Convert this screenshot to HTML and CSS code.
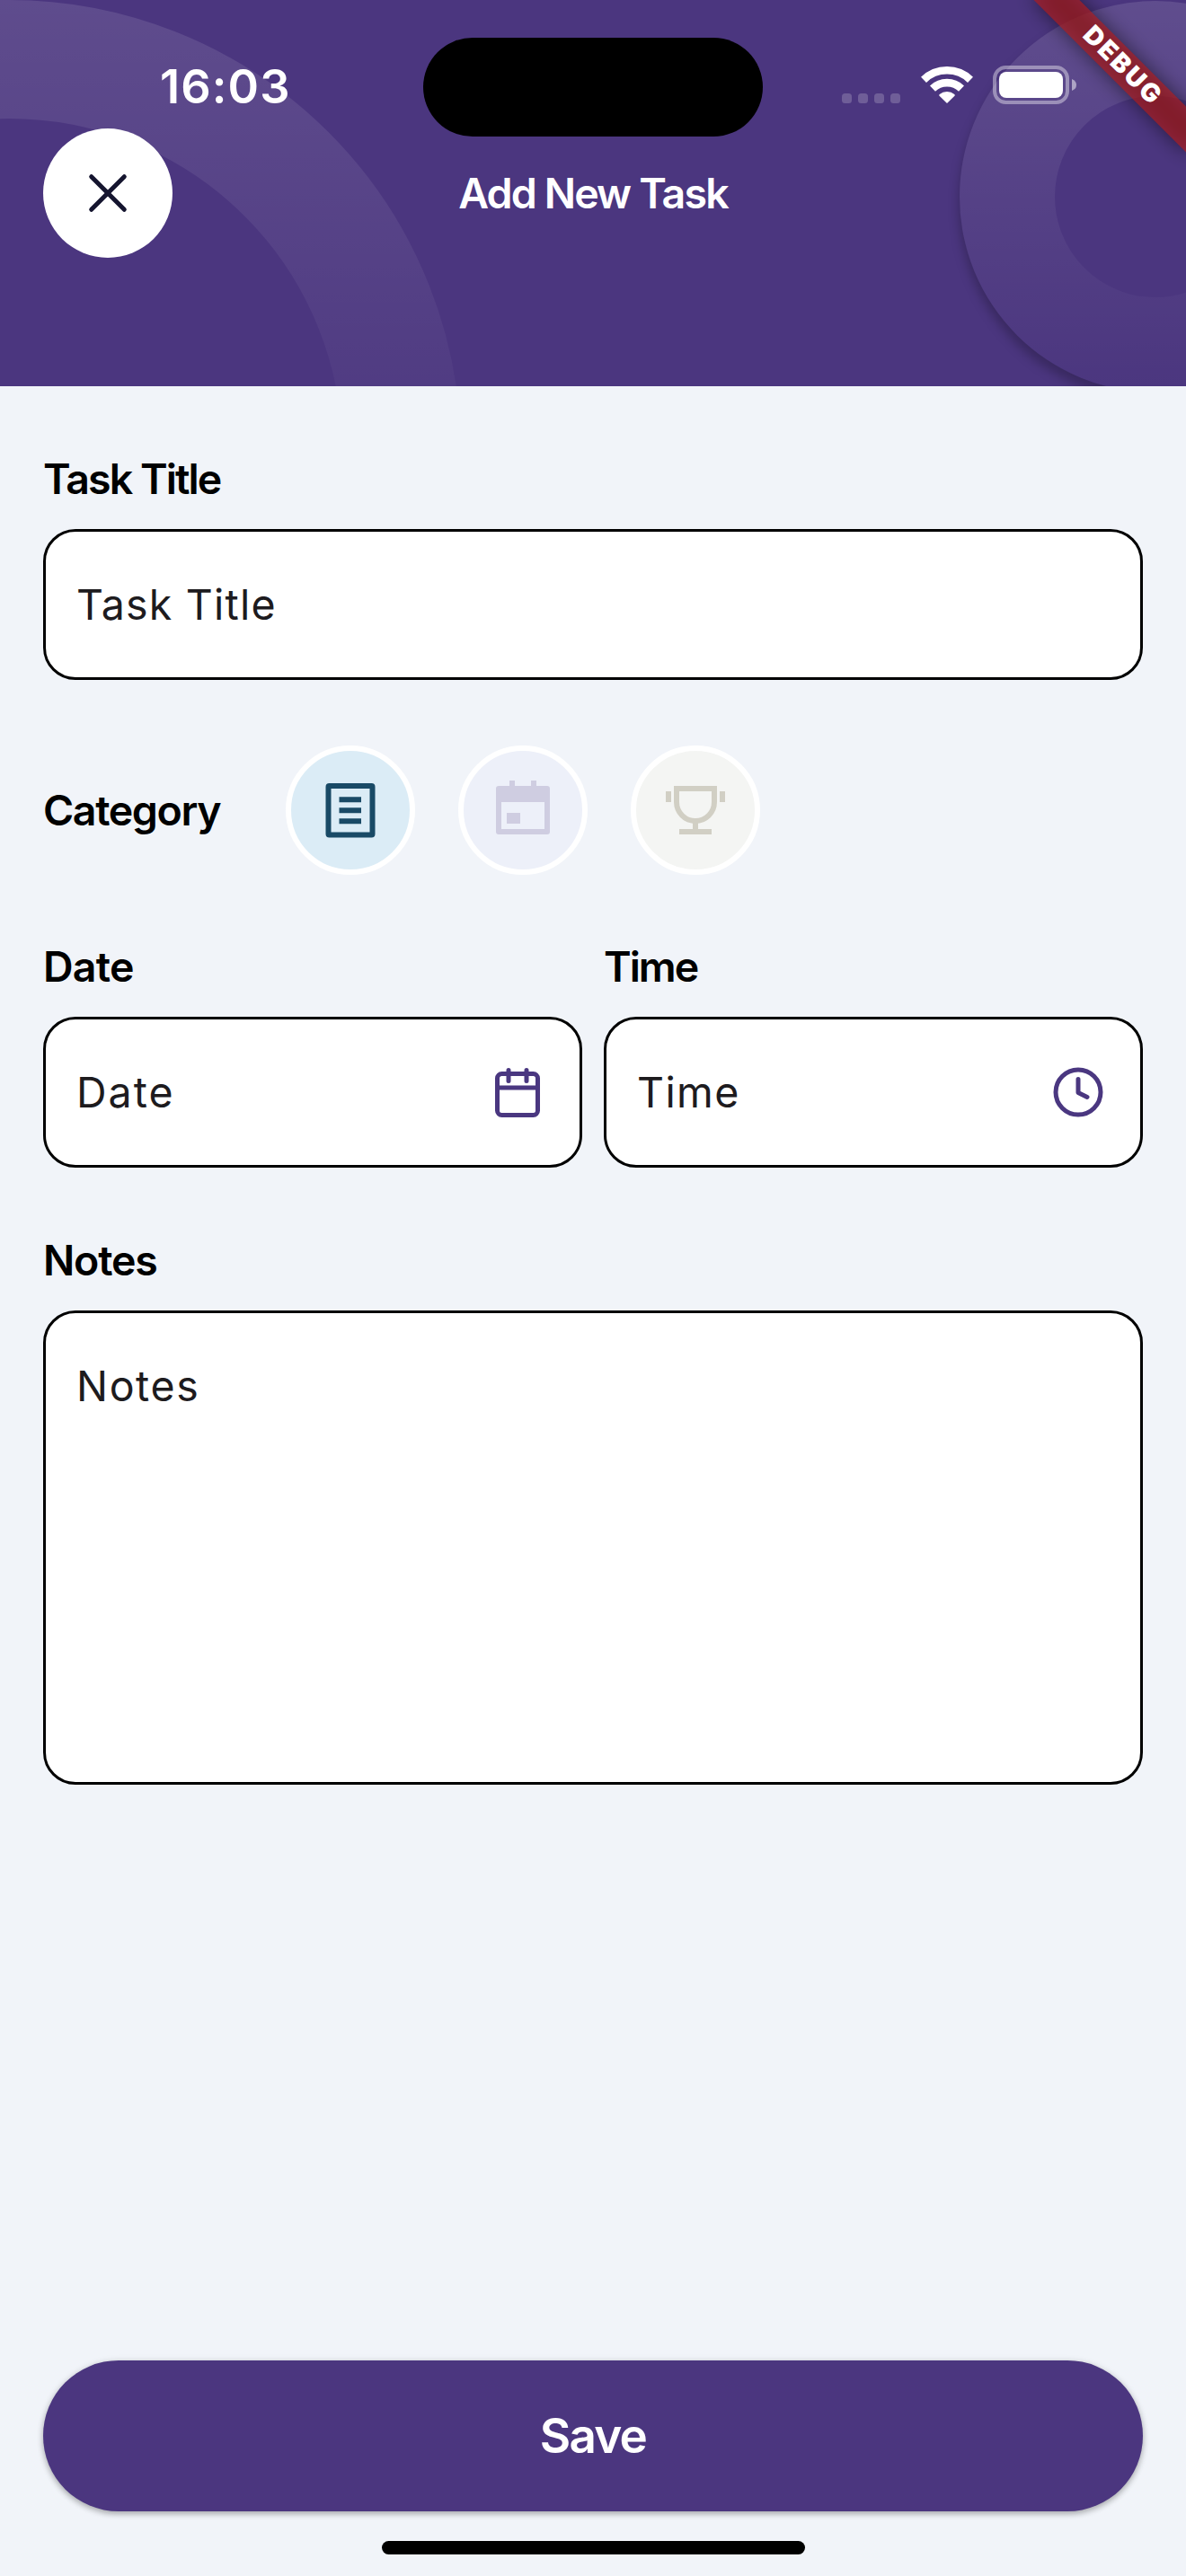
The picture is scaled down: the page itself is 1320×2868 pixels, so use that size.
FILE: index.html
```
<!DOCTYPE html>
<html lang="en">
<head>
<meta charset="utf-8">
<title>Add New Task</title>
<link rel="stylesheet" href="styles.css">
</head>
<body>
<main class="screen">
  <header class="header">
    <svg class="rings" width="1320" height="430" viewBox="0 0 1320 430" aria-hidden="true">
      <defs>
        <linearGradient id="fadeLarge" gradientUnits="userSpaceOnUse" x1="0" y1="0" x2="0" y2="590">
          <stop offset="0" stop-color="#fff" stop-opacity=".11"/>
          <stop offset="1" stop-color="#fff" stop-opacity="0"/>
        </linearGradient>
        <linearGradient id="fadeSmall" gradientUnits="userSpaceOnUse" x1="0" y1="0" x2="0" y2="438">
          <stop offset="0" stop-color="#fff" stop-opacity=".115"/>
          <stop offset="1" stop-color="#fff" stop-opacity="0"/>
        </linearGradient>
        <filter id="soft" x="-20%" y="-20%" width="140%" height="140%"><feGaussianBlur stdDeviation="6"/></filter>
        <mask id="outside">
          <rect width="1320" height="430" fill="#fff"/>
          <circle cx="1286" cy="219" r="218" fill="#000"/>
        </mask>
      </defs>
      <circle cx="10" cy="503" r="437" fill="none" stroke="url(#fadeLarge)" stroke-width="132"/>
      <g mask="url(#outside)"><circle cx="1285" cy="228" r="218" fill="#000" fill-opacity=".24" filter="url(#soft)"/></g>
      <circle cx="1286" cy="219" r="165" fill="none" stroke="url(#fadeSmall)" stroke-width="106"/>
    </svg>

    <div class="status">
      <div class="status-time">16:03</div>
      <div class="island"></div>
      <div class="status-icons">
        <div class="dots"><i></i><i></i><i></i><i></i></div>
        <svg class="wifi" width="58" height="43" viewBox="0 0 58 43" fill="none" stroke="#fff" aria-hidden="true">
          <path d="M3 15.8A37.5 37.5 0 0 1 55 15.8" stroke-width="8.6"/>
          <path d="M13 25.6A23 23 0 0 1 45 25.6" stroke-width="8.6"/>
          <path d="M29 42L20.3 33.4Q20 32.6 20.7 32A12.6 12.6 0 0 1 37.3 32Q38 32.6 37.7 33.4Z" fill="#fff" stroke="none"/>
        </svg>
        <svg class="battery" width="94" height="43" viewBox="0 0 94 43" aria-hidden="true">
          <rect x="2" y="2" width="81" height="39" rx="12.5" fill="none" stroke="#fff" stroke-opacity=".4" stroke-width="4"/>
          <rect x="7" y="7" width="71" height="29" rx="8" fill="#fff"/>
          <path d="M88 15Q93 17 93 21.5T88 28Z" fill="#fff" fill-opacity=".5"/>
        </svg>
      </div>
    </div>

    <div class="nav">
      <button class="close" aria-label="Close">
        <svg width="44" height="44" viewBox="0 0 44 44" fill="none" stroke="#15152f" stroke-width="5" stroke-linecap="round"><path d="M3.7 3.7L40.3 40.3M40.3 3.7L3.7 40.3"/></svg>
      </button>
      <h1 class="title">Add New Task</h1>
    </div>

    <svg class="ribbon" width="220" height="220" viewBox="0 0 220 220" aria-label="DEBUG">
      <defs><filter id="ribbonShadow" x="-20%" y="-120%" width="140%" height="340%"><feGaussianBlur stdDeviation="11"/></filter></defs>
      <g transform="translate(148 72) rotate(45)">
        <rect x="-120" y="-18" width="240" height="36" fill="#000" fill-opacity=".5" filter="url(#ribbonShadow)"/>
        <rect x="-120" y="-18" width="240" height="36" fill="#b71c1c" fill-opacity=".63"/>
        <text class="ribbon-text" x="2" y="9" text-anchor="middle">DEBUG</text>
      </g>
    </svg>
  </header>

  <form class="form">
    <div class="field">
      <div class="label ls-title">Task Title</div>
      <div class="box"><span class="hint hint-title">Task Title</span></div>
    </div>

    <div class="category">
      <div class="label ls-category">Category</div>
      <div class="choices">
        <div class="choice choice-task">
          <svg width="72" height="72" viewBox="0 0 72 72" aria-hidden="true">
            <rect x="11.5" y="9" width="49" height="54.5" rx="1" fill="none" stroke="#194a66" stroke-width="6"/>
            <path d="M23.5 21.2h24.5v6h-24.5zM23.5 33.3h24.5v6h-24.5zM23.5 45.2h24.5v6h-24.5z" fill="#194a66"/>
          </svg>
        </div>
        <div class="choice choice-event">
          <svg width="72" height="72" viewBox="0 0 72 72" aria-hidden="true" fill="#cfcde1">
            <path fill-rule="evenodd" d="M21 3h6v6h18V3h6v6h12a3 3 0 0 1 3 3v48a3 3 0 0 1-3 3H9a3 3 0 0 1-3-3V12a3 3 0 0 1 3-3h12zM12 27v30h48V27z"/>
            <rect x="18" y="39" width="15" height="12"/>
          </svg>
        </div>
        <div class="choice choice-goal">
          <svg width="72" height="72" viewBox="0 0 72 72" aria-hidden="true" fill="#d1cfc4">
            <path d="M15 12h42v15a21 21 0 0 1-42 0z" fill="none" stroke="#d1cfc4" stroke-width="6"/>
            <path d="M33 49h6v8h15v6H18v-6h15zM3 15h6v12H3zM63 15h6v12h-6z"/>
          </svg>
        </div>
      </div>
    </div>

    <div class="row">
      <div class="field">
        <div class="label ls-date">Date</div>
        <div class="box">
          <span class="hint hint-date">Date</span>
          <svg width="72" height="72" viewBox="0 0 72 72" fill="none" stroke="#4a3780" stroke-width="5" stroke-linecap="round" aria-hidden="true">
            <rect x="13.5" y="15.5" width="45" height="46" rx="5"/>
            <path d="M26 11.5v12M46 11.5v12"/><path d="M14 31h44" stroke-linecap="butt"/>
          </svg>
        </div>
      </div>
      <div class="field">
        <div class="label ls-time">Time</div>
        <div class="box">
          <span class="hint hint-time">Time</span>
          <svg width="72" height="72" viewBox="0 0 72 72" fill="none" stroke="#4a3780" stroke-width="5" stroke-linecap="round" stroke-linejoin="round" aria-hidden="true">
            <circle cx="36" cy="36" r="25"/><path d="M36 21.5V36.5L46 41.5"/>
          </svg>
        </div>
      </div>
    </div>

    <div class="field">
      <div class="label ls-notes">Notes</div>
      <div class="box box-tall"><span class="hint hint-notes">Notes</span></div>
    </div>
  </form>

  <footer class="footer">
    <button class="save">Save</button>
    <div class="home-bar"></div>
  </footer>
</main>
</body>
</html>
```
FILE: styles.css
```
* { box-sizing: border-box; }

body {
  margin: 0;
  font-family: Inter, "Liberation Sans", sans-serif;
  background: #f1f4f9;
}

.screen {
  display: flex;
  flex-direction: column;
  width: 1320px;
  height: 2868px;
  background: #f1f4f9;
}

/* Header */
.header {
  position: relative;
  height: 430px;
  overflow: hidden;
  background: #4b367f;
  color: #fff;
}

.rings { position: absolute; left: 0; top: 0; }

.ribbon { position: absolute; right: 0; top: 0; }

.ribbon-text {
  font-size: 28.5px;
  font-weight: 900;
  letter-spacing: 2.4px;
  fill: #fff;
}

.status {
  position: relative;
  display: grid;
  grid-template-columns: 471px 378px 1fr;
  align-items: start;
  height: 143px;
}

.status-time {
  padding: 66px 0 0 178px;
  font-size: 52.3px;
  font-weight: 600;
  line-height: 60px;
  letter-spacing: 1.1px;
}

.island {
  height: 110px;
  margin-top: 42px;
  border-radius: 55px;
  background: #000;
}

.status-icons {
  display: flex;
  align-items: flex-end;
  padding: 73px 0 0 88px;
}

.dots { display: flex; gap: 7px; padding-bottom: 1px; }

.dots i {
  width: 11px;
  height: 11px;
  border-radius: 3.5px;
  background: rgba(255, 255, 255, .2);
}

.wifi { margin-left: 22.5px; }
.battery { margin-left: 22.5px; }

.nav {
  position: relative;
  display: grid;
  grid-template-columns: 144px 1fr 144px;
  align-items: center;
  padding: 0 48px;
}

.close {
  display: flex;
  align-items: center;
  justify-content: center;
  width: 144px;
  height: 144px;
  padding: 0;
  border: 0;
  border-radius: 50%;
  background: #fff;
}

.title {
  margin: 0;
  font-size: 46.5px;
  font-weight: 600;
  line-height: 60px;
  letter-spacing: -1.85px;
  text-align: center;
}

/* Form */
.form {
  flex: 1;
  display: flex;
  flex-direction: column;
  gap: 72.7px;
  padding: 73px 48px 0;
}

.field { flex: none; display: flex; flex-direction: column; gap: 26px; }

.row { display: grid; grid-template-columns: 1fr 1fr; gap: 24px; }

.label {
  font-size: 46.5px;
  font-weight: 600;
  line-height: 60px;
  color: #000;
}

.ls-title { letter-spacing: -1.95px; }
.ls-category { letter-spacing: -1.4px; }
.ls-date { letter-spacing: -.75px; }
.ls-time { letter-spacing: -2px; }
.ls-notes { letter-spacing: -1.2px; }

.box {
  display: flex;
  align-items: center;
  justify-content: space-between;
  height: 168px;
  padding: 0 33px 0 34px;
  border: 3px solid #000;
  border-radius: 36px;
  background: #fff;
}

.box-tall {
  align-items: flex-start;
  height: 528px;
  padding-top: 51px;
}

.hint {
  font-size: 46.5px;
  line-height: 60px;
  color: #1d1b1e;
}

.hint-title { letter-spacing: 1.2px; }
.hint-date { letter-spacing: 2px; }
.hint-time { letter-spacing: 1.4px; }
.hint-notes { letter-spacing: 1.6px; }

.category { display: flex; align-items: center; }

.category .label { width: 270px; }

.choices { display: flex; gap: 48px; }

.choice {
  display: flex;
  align-items: center;
  justify-content: center;
  width: 144px;
  height: 144px;
  border: 6px solid #fff;
  border-radius: 50%;
}

.choice-task { background: #dbecf6; }
.choice-event { background: #edf0f9; }
.choice-goal { background: #f4f5f3; }

/* Footer */
.footer {
  display: flex;
  flex-direction: column;
  align-items: center;
  gap: 33px;
  padding: 0 48px 24px;
}

.save {
  width: 100%;
  height: 168px;
  padding: 0;
  border: 0;
  border-radius: 84px;
  background: #4b367f;
  box-shadow: 0 3px 6px rgba(0, 0, 0, .25), 0 1px 9px rgba(0, 0, 0, .1);
  color: #fff;
  font-family: inherit;
  font-size: 53px;
  font-weight: 600;
  letter-spacing: -1.8px;
}

.home-bar {
  width: 471px;
  height: 15px;
  border-radius: 7.5px;
  background: #000;
}
```
